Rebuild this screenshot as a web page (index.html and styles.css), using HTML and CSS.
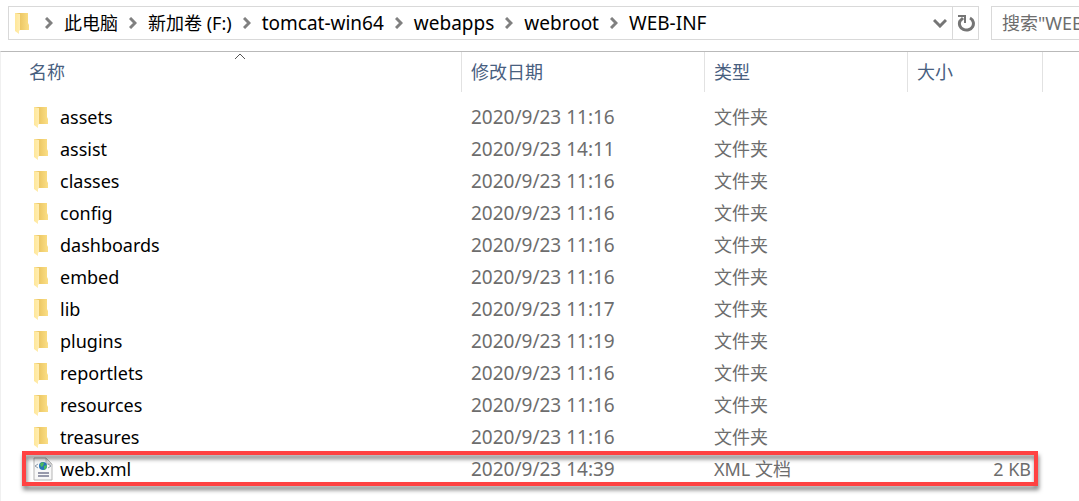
FILE: index.html
```html
<!DOCTYPE html>
<html lang="zh-CN">
<head>
<meta charset="UTF-8">
<meta name="viewport" content="width=device-width, initial-scale=1.0">
<title>WEB-INF</title>
<link rel="stylesheet" href="styles.css">
</head>
<body>
    <!-- shared icons -->
    <svg class="sprite" aria-hidden="true">
        <defs>
            <linearGradient id="back" x1="0" y1="0" x2="1" y2="0">
                <stop offset="0.3" stop-color="#ebc561"/>
                <stop offset="1" stop-color="#fbdf87"/>
            </linearGradient>
            <linearGradient id="front" x1="0" y1="0" x2="1" y2="0">
                <stop offset="0" stop-color="#ffe799"/>
                <stop offset="1" stop-color="#ffedb2"/>
            </linearGradient>
        </defs>
        <symbol id="folder" viewBox="0 -1 14 22">
            <path d="M0 0H13V10L14 12V17H0z" fill="url(#back)"/>
            <path d="M0 0L5 1V17L4 18V21L0 18z" fill="url(#front)"/>
        </symbol>
        <symbol id="chevron" viewBox="0 0 8 12">
            <path d="M1 1L6 6L1 11" fill="none" stroke="#808080" stroke-width="3"/>
        </symbol>
    </svg>

    <div class="toolbar">
        <div class="address">
            <svg class="folder"><use href="#folder"/></svg>
            <nav class="crumbs">
                <svg class="chevron"><use href="#chevron"/></svg>
                <button class="crumb">此电脑</button>
                <svg class="chevron"><use href="#chevron"/></svg>
                <button class="crumb">新加卷 (F:)</button>
                <svg class="chevron"><use href="#chevron"/></svg>
                <button class="crumb latin">tomcat-win64</button>
                <svg class="chevron"><use href="#chevron"/></svg>
                <button class="crumb latin">webapps</button>
                <svg class="chevron"><use href="#chevron"/></svg>
                <button class="crumb latin">webroot</button>
                <svg class="chevron"><use href="#chevron"/></svg>
                <button class="crumb latin">WEB-INF</button>
            </nav>
            <button class="history" aria-label="以前的位置">
                <svg width="14" height="10" viewBox="0 0 14 10"><path d="M1 2L7 8L13 2" fill="none" stroke="#757575" stroke-width="3"/></svg>
            </button>
            <button class="refresh" aria-label="刷新">
                <svg width="18" height="18" viewBox="0 0 18 18">
                    <path d="M13 4A7 6.5 0 1 1 3 7L6 4" fill="none" stroke="#757575" stroke-width="3"/>
                    <path d="M1 2H8V9" fill="none" stroke="#757575" stroke-width="2"/>
                </svg>
            </button>
        </div>
        <input class="search" type="text" placeholder='搜索"WEB-INF"' aria-label="搜索">
    </div>

    <main class="files">
        <table class="list">
            <colgroup>
                <col class="colName"><col class="colDate"><col class="colType"><col class="colSize">
            </colgroup>
            <thead>
                <tr>
                    <th>名称<svg class="sort" viewBox="0 0 12 7"><path d="M1 6L6 1L11 6" fill="none" stroke="#555"/></svg></th>
                    <th>修改日期</th>
                    <th>类型</th>
                    <th>大小</th>
                </tr>
            </thead>
            <tbody>
                <tr><td><div class="name"><svg class="folder"><use href="#folder"/></svg>assets</div></td><td class="date">2020/9/23 11:16</td><td>文件夹</td><td></td></tr>
                <tr><td><div class="name"><svg class="folder"><use href="#folder"/></svg>assist</div></td><td class="date">2020/9/23 14:11</td><td>文件夹</td><td></td></tr>
                <tr><td><div class="name"><svg class="folder"><use href="#folder"/></svg>classes</div></td><td class="date">2020/9/23 11:16</td><td>文件夹</td><td></td></tr>
                <tr><td><div class="name"><svg class="folder"><use href="#folder"/></svg>config</div></td><td class="date">2020/9/23 11:16</td><td>文件夹</td><td></td></tr>
                <tr><td><div class="name"><svg class="folder"><use href="#folder"/></svg>dashboards</div></td><td class="date">2020/9/23 11:16</td><td>文件夹</td><td></td></tr>
                <tr><td><div class="name"><svg class="folder"><use href="#folder"/></svg>embed</div></td><td class="date">2020/9/23 11:16</td><td>文件夹</td><td></td></tr>
                <tr><td><div class="name"><svg class="folder"><use href="#folder"/></svg>lib</div></td><td class="date">2020/9/23 11:17</td><td>文件夹</td><td></td></tr>
                <tr><td><div class="name"><svg class="folder"><use href="#folder"/></svg>plugins</div></td><td class="date">2020/9/23 11:19</td><td>文件夹</td><td></td></tr>
                <tr><td><div class="name"><svg class="folder"><use href="#folder"/></svg>reportlets</div></td><td class="date">2020/9/23 11:16</td><td>文件夹</td><td></td></tr>
                <tr><td><div class="name"><svg class="folder"><use href="#folder"/></svg>resources</div></td><td class="date">2020/9/23 11:16</td><td>文件夹</td><td></td></tr>
                <tr><td><div class="name"><svg class="folder"><use href="#folder"/></svg>treasures</div></td><td class="date">2020/9/23 11:16</td><td>文件夹</td><td></td></tr>
                <tr class="marked">
                    <td>
                        <div class="name">
                            <svg class="xml" viewBox="0 0 20 24">
                                <path d="M1 1H13L19 7V23H1z" fill="#f8f8f8" stroke="#b5b5b5"/>
                                <path d="M13 1V7H19z" fill="#ddd" stroke="#b5b5b5"/>
                                <circle cx="10" cy="9" r="4" fill="#2777b8"/>
                                <path d="M7 7Q9 4 11 6L10 9L8 10zM11 9L14 8Q14 12 11 13z" fill="#4dbb5d"/>
                                <path d="M5 7L2 9L5 11M15 7L18 9L15 11" fill="none" stroke="#8e9aa8"/>
                                <path d="M5 16H16M5 19H16" stroke="#777a91" stroke-width="1.5"/>
                            </svg>web.xml
                        </div>
                    </td>
                    <td class="date">2020/9/23 14:39</td>
                    <td>XML 文档</td>
                    <td class="size">2 KB</td>
                </tr>
            </tbody>
        </table>
    </main>
</body>
</html>
```

FILE: styles.css
```css
* {
    box-sizing: border-box;
}

body {
    margin: 0;
    min-height: 100vh;
    background-color: #fff;
    color: #6d6d6d;
    font-family: "Noto Sans", "Noto Sans CJK SC", sans-serif;
    font-size: 18px;
    line-height: 24px;
}

button {
    border: none;
    background: none;
    padding: 0;
    color: inherit;
    font: inherit;
    cursor: pointer;
}

.sprite {
    position: absolute;
    width: 0;
    height: 0;
}

/* Address bar */
.toolbar {
    display: flex;
    gap: 12px;
    padding: 6px 0 11px 8px;
}

.address {
    display: flex;
    flex: 1;
    align-items: center;
    height: 34px;
    padding-left: 6px;
    border: 1px solid #d9d9d9;
}

.folder {
    flex: none;
    width: 14px;
    height: 22px;
}

.crumbs {
    display: flex;
    flex: 1;
    align-items: center;
    gap: 11px;
    padding-left: 16px;
}

.crumb {
    color: #000;
    white-space: nowrap;
}

.latin {
    font-size: 19px;
}

.chevron {
    width: 8px;
    height: 12px;
}

.history {
    display: flex;
    align-items: center;
    justify-content: center;
    width: 24px;
    height: 32px;
}

.refresh {
    display: flex;
    align-items: center;
    justify-content: center;
    width: 26px;
    height: 32px;
    border-left: 1px solid #d9d9d9;
}

.search {
    width: 88px;
    height: 34px;
    padding: 0 0 0 10px;
    border: 1px solid #d9d9d9;
    border-right: none;
    border-radius: 0;
    font: inherit;
}

.search::placeholder {
    color: #6d6d6d;
}

/* File list */
.files {
    padding-bottom: 16px;
    border-top: 1px solid #b9b9b9;
    border-left: 1px solid #f0f0f0;
}

.list {
    width: 1042px;
    border-collapse: separate;
    border-spacing: 0;
    table-layout: fixed;
}

.colName {
    width: 461px;
}

.colDate {
    width: 243px;
}

.colType {
    width: 203px;
}

.colSize {
    width: 135px;
}

th {
    position: relative;
    height: 40px;
    padding: 0 9px;
    border-right: 1px solid #e2e2e2;
    color: #48607f;
    font-weight: normal;
    text-align: left;
}

th:first-child {
    padding-left: 28px;
}

.sort {
    position: absolute;
    top: 1px;
    left: calc(50% + 3px);
    width: 12px;
    height: 7px;
}

tbody::before {
    content: "";
    display: block;
    height: 9px;
}

td {
    height: 32px;
    padding: 0 9px;
    white-space: nowrap;
}

.name {
    display: flex;
    align-items: center;
    gap: 12px;
    padding-left: 24px;
    color: #000;
}

.date {
    font-size: 19px;
}

.size {
    padding-right: 12px;
    text-align: right;
}

.xml {
    width: 20px;
    height: 24px;
    margin: 0 -5px 0 -1px;
}

/* Red frame around the file to edit */
.marked {
    position: relative;
}

.marked::after {
    content: "";
    position: absolute;
    inset: -2px 5px -1px 21px;
    border: 4px solid #ff4242;
    filter: drop-shadow(1px 4px 2px rgba(0, 0, 0, 0.5));
    pointer-events: none;
}
```
